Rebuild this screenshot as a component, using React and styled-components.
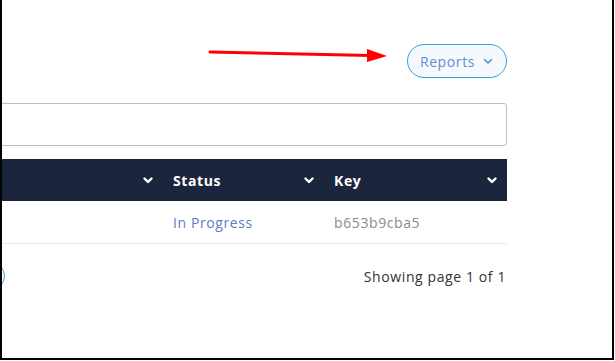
import React from "react"
import styled, { createGlobalStyle } from "styled-components"

const GlobalStyle = createGlobalStyle`
    html, body {
        margin: 0;
        padding: 0;
        background: #ffffff;
    }
    body {
        font-family: "Open Sans", "Liberation Sans", sans-serif;
        letter-spacing: 0.6px;
    }
`

const Frame = styled.div`
    position: relative;
    box-sizing: border-box;
    width: 614px;
    height: 360px;
    border-left: 2px solid #000;
    border-right: 2px solid #000;
    border-bottom: 2px solid #000;
    overflow: hidden;
    background: #fff;
`

const Content = styled.div`
    display: flex;
    flex-direction: column;
    width: 606px;
    margin-left: -101px;
    padding-top: 44px;
`

const Toolbar = styled.div`
    display: flex;
    justify-content: flex-end;
`

const ReportsButton = styled.button`
    display: flex;
    align-items: center;
    gap: 8px;
    height: 34px;
    padding: 0 13px 0 12px;
    border: 1px solid #2fa2e4;
    border-radius: 17px;
    background: #f6f9fc;
    color: #5b8fd6;
    font-family: inherit;
    letter-spacing: inherit;
    font-size: 14px;
    cursor: pointer;
`

const Search = styled.input`
    box-sizing: border-box;
    width: 100%;
    height: 43px;
    margin-top: 25px;
    border: 1px solid #bdbdbd;
    border-radius: 3px;
    outline: none;
`

const Table = styled.div`
    display: grid;
    grid-template-columns: 262px 161px 183px;
    margin-top: 13px;
`

const HeadCell = styled.div`
    display: flex;
    align-items: center;
    justify-content: space-between;
    height: 42px;
    padding: 0 10px;
    background: #1b263e;
    color: #fff;
    font-size: 14px;
    font-weight: 700;
`

const Cell = styled.div`
    display: flex;
    align-items: center;
    height: 42px;
    padding: 0 10px;
    border-bottom: 1px solid #ececec;
    color: ${p => p.color || "#333"};
    font-size: 14px;
`

const Footer = styled.div`
    display: flex;
    align-items: center;
    justify-content: space-between;
    margin-top: 17px;
`

const PageButtons = styled.div`
    display: flex;
    gap: 7px;
`

const PageButton = styled.button`
    box-sizing: border-box;
    width: 30px;
    height: 30px;
    border: 1px solid #2fa2e4;
    border-radius: 50%;
    background: #fff;
    color: #2fa2e4;
    padding: 0;
`

const PageInfo = styled.span`
    padding-right: 1px;
    color: #333;
    font-size: 14px;
`

const Arrow = styled.svg`
    position: absolute;
    left: 205px;
    top: 45px;
`

function Chevron({ color = "#fff", width = 2.4 }) {
    return (
        <svg width="10" height="7" viewBox="0 0 10 7">
            <polyline points="1.5,1.5 5,5 8.5,1.5" fill="none" stroke={color} strokeWidth={width} strokeLinecap="round" strokeLinejoin="round" />
        </svg>
    )
}

export default function App() {
    return (
        <Frame>
            <GlobalStyle />
            <Content>
                <Toolbar>
                    <ReportsButton>
                        Reports
                        <Chevron color="#4a8fd8" width={1.6} />
                    </ReportsButton>
                </Toolbar>
                <Search />
                <Table>
                    <HeadCell><span>Name</span><Chevron /></HeadCell>
                    <HeadCell><span>Status</span><Chevron /></HeadCell>
                    <HeadCell><span>Key</span><Chevron /></HeadCell>
                    <Cell color="#333">Sample</Cell>
                    <Cell color="#5b7cc6">In Progress</Cell>
                    <Cell color="#8a8a8a">b653b9cba5</Cell>
                </Table>
                <Footer>
                    <PageButtons>
                        <PageButton>«</PageButton>
                        <PageButton>‹</PageButton>
                        <PageButton>1</PageButton>
                    </PageButtons>
                    <PageInfo>Showing page 1 of 1</PageInfo>
                </Footer>
            </Content>
            <Arrow width="185" height="22" viewBox="0 0 185 22">
                <line x1="3" y1="7" x2="164" y2="10.5" stroke="#f00" strokeWidth="3" strokeLinecap="round" />
                <polygon points="160,4 180,11 160,17" fill="#f00" />
            </Arrow>
        </Frame>
    )
}
